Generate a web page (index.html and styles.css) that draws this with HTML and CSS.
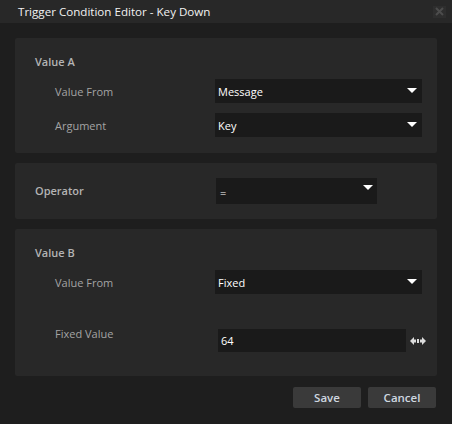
FILE: index.html
```html
<!DOCTYPE html>
<html>
<head>
<meta charset="utf-8">
<link rel="stylesheet" href="styles.css">
</head>
<body>
<div class="window">
  <div class="titlebar">
    <span class="title">Trigger Condition Editor - Key Down</span>
    <span class="close"><svg width="9" height="9" viewBox="0 0 9 9"><path d="M1 1L8 8M8 1L1 8" stroke="#4c4c4c" stroke-width="2"/></svg></span>
  </div>
  <div class="content">
    <section class="panel panel-a">
      <div class="heading">Value A</div>
      <div class="row">
        <span class="label">Value From</span>
        <div class="select"><span>Message</span><i class="arrow"></i></div>
      </div>
      <div class="row">
        <span class="label">Argument</span>
        <div class="select"><span>Key</span><i class="arrow"></i></div>
      </div>
    </section>
    <section class="panel panel-op">
      <span class="heading">Operator</span>
      <div class="select select-op"><span>=</span><i class="arrow arrow-op"></i></div>
    </section>
    <section class="panel panel-b">
      <div class="heading">Value B</div>
      <div class="row">
        <span class="label">Value From</span>
        <div class="select"><span>Fixed</span><i class="arrow"></i></div>
      </div>
      <div class="row row-fixed">
        <span class="label label-top">Fixed Value</span>
        <div class="field-wrap">
          <div class="input">64</div>
          <svg class="drag" width="16" height="8" viewBox="0 0 16 8"><path d="M0 4L4 0V8Z M12 0L16 4L12 8Z" fill="#dcdcdc"/><rect x="4" y="2.5" width="2" height="3" fill="#dcdcdc"/><rect x="7" y="2" width="2" height="4" fill="#dcdcdc"/><rect x="10" y="2.5" width="2" height="3" fill="#dcdcdc"/></svg>
        </div>
      </div>
    </section>
    <div class="buttons">
      <button class="btn">Save</button>
      <button class="btn">Cancel</button>
    </div>
  </div>
</div>
</body>
</html>
```
FILE: styles.css
```css
html, body {
  margin: 0;
  padding: 0;
  background: #1e1e1e;
}
body {
  width: 452px;
  height: 424px;
  overflow: hidden;
  font-family: "Open Sans", "Noto Sans", sans-serif;
  font-size: 11px;
}
.window {
  display: flex;
  flex-direction: column;
  height: 424px;
}
.titlebar {
  height: 23px;
  background: #282828;
  display: flex;
  align-items: center;
  justify-content: space-between;
  padding: 0 6px 0 18px;
}
.title {
  color: #f2f2f2;
  font-size: 11.6px;
}
.close {
  width: 13px;
  height: 12px;
  background: #2e2e2e;
  display: flex;
  align-items: center;
  justify-content: center;
}
.content {
  padding: 15px 15px 0 15px;
  display: flex;
  flex-direction: column;
  gap: 10px;
}
.panel {
  background: #282828;
  border-radius: 2px;
}
.heading {
  color: #b4b4b4;
  font-weight: 600;
  line-height: 16px;
}
.label {
  color: #a4a4a4;
  padding-left: 40px;
  width: 160px;
  flex: none;
}
.panel-a {
  padding: 16px 15px 15px 20px;
  display: flex;
  flex-direction: column;
  gap: 10px;
  height: 84px;
}
.panel-a .heading {
  margin-bottom: -1px;
}
.row {
  display: flex;
  align-items: center;
  margin-left: -20px;
}
.select {
  flex: 1;
  height: 24px;
  background: #1a1a1a;
  display: flex;
  align-items: center;
  justify-content: space-between;
  padding: 0 5px 0 3px;
  color: #ffffff;
}
.arrow {
  width: 0;
  height: 0;
  border-left: 5px solid transparent;
  border-right: 5px solid transparent;
  border-top: 5px solid #ffffff;
  margin-top: -1px;
}
.panel-op {
  height: 56px;
  box-sizing: border-box;
  padding: 15px 0 15px 20px;
  display: flex;
  align-items: center;
}
.panel-op .heading {
  width: 181px;
  flex: none;
}
.select-op {
  flex: none;
  width: 153px;
  height: 26px;
  padding: 0 4px 0 4px;
  align-items: center;
}
.select-op span {
  margin-top: 2px;
}
.arrow-op {
  margin-top: -7px;
}
.panel-b {
  height: 147px;
  box-sizing: border-box;
  padding: 16px 15px 15px 20px;
  display: flex;
  flex-direction: column;
}
.panel-b .heading {
  margin-bottom: 9px;
}
.row-fixed {
  margin-top: 35px;
  align-items: flex-start;
}
.label-top {
  margin-top: -3px;
}
.field-wrap {
  display: flex;
  align-items: center;
  flex: 1;
  padding-left: 3px;
}
.input {
  width: 188px;
  height: 23px;
  line-height: 23px;
  background: #1a1a1a;
  color: #ffffff;
  padding-left: 3px;
  box-sizing: border-box;
}
.drag {
  margin-left: 4px;
}
.buttons {
  display: flex;
  justify-content: flex-end;
  gap: 7px;
  padding-top: 1px;
  padding-right: 1px;
}
.btn {
  width: 68px;
  height: 21px;
  background: #3a3a3a;
  border: none;
  border-radius: 2px;
  color: #cfd8e0;
  font-family: "Open Sans", "Noto Sans", sans-serif;
  font-size: 11.5px;
  font-weight: 600;
  padding: 0;
}
```
